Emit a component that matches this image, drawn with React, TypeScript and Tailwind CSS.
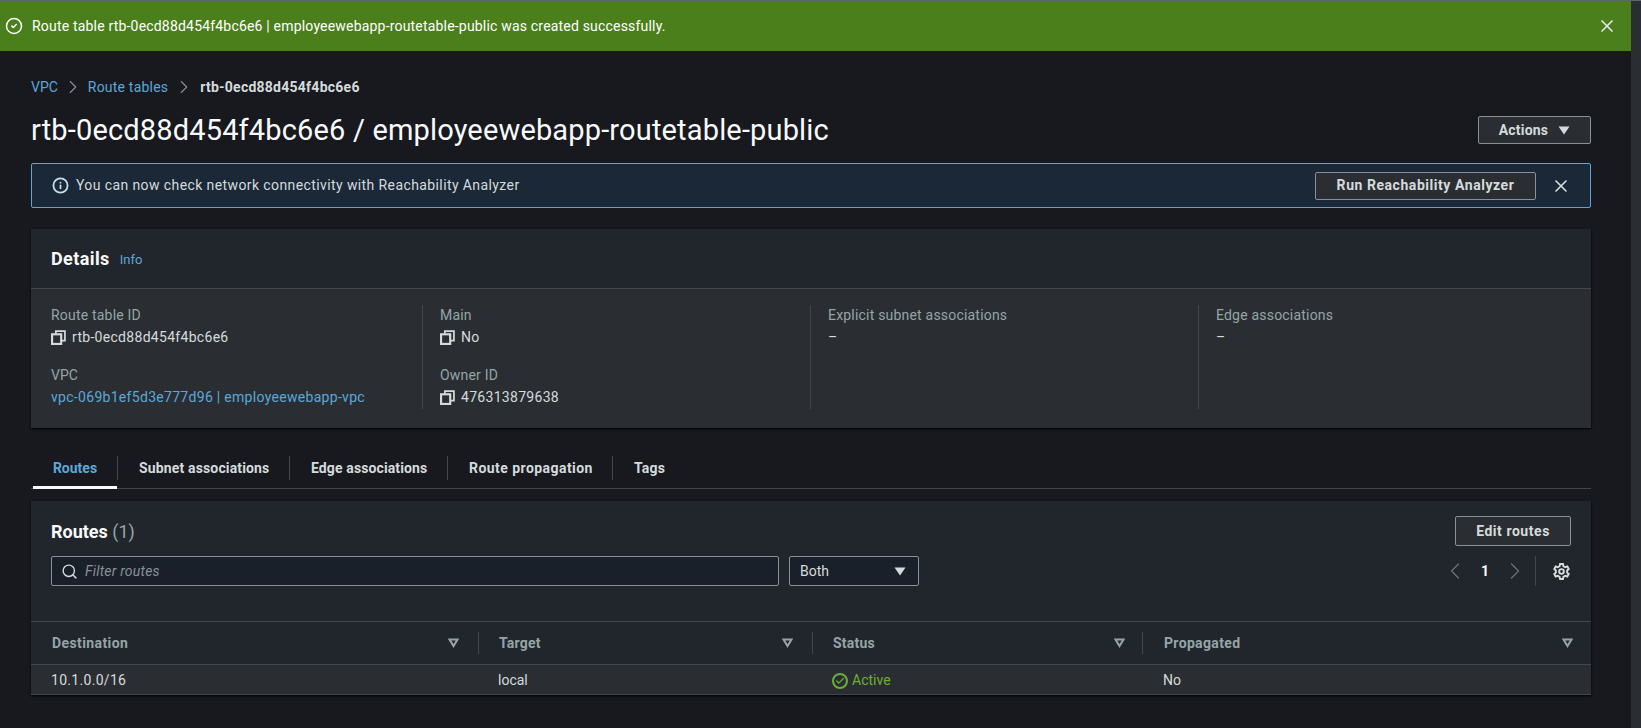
import { Check, ChevronLeft, ChevronRight, CircleCheck, Info, Search, X } from 'lucide-react';

function CopyIcon() {
  return (
    <svg width="15" height="15" viewBox="0 0 14 14" fill="none" stroke="#d5dbdb" strokeWidth="2" className="shrink-0">
      <path d="M4.5 3.5V1h8.5v9h-3" strokeWidth="1.6" />
      <rect x="1" y="4" width="8.5" height="9" />
    </svg>
  );
}

function CaretDown({ className = '' }: { className?: string }) {
  return (
    <svg width="12" height="9" viewBox="0 0 12 9" className={className}>
      <path d="M0.5 0.5h11L6 8.5z" fill="#d5dbdb" />
    </svg>
  );
}

function SortCaret() {
  return (
    <svg width="11" height="10" viewBox="0 0 11 10" fill="none" stroke="#95a5a6" strokeWidth="2" className="shrink-0">
      <path d="M1.5 1.5h8L5.5 8z" />
    </svg>
  );
}

function GearIcon() {
  return (
    <svg width="17" height="17" viewBox="0 0 16 16" fill="none" stroke="#d5dbdb" strokeWidth="1.8">
      <path d="M6.6 1h2.8l.4 2 1.7 1 2-.7 1.3 2.4-1.5 1.3v2l1.5 1.3-1.3 2.4-2-.7-1.7 1-.4 2H6.6l-.4-2-1.7-1-2 .7-1.3-2.4 1.5-1.3V7L1.2 5.7l1.3-2.4 2 .7 1.7-1z" />
      <circle cx="8" cy="8" r="2.2" />
    </svg>
  );
}

const tabs = [
  { label: 'Subnet associations', width: 'w-[172px]', tracking: 'tracking-[0.15px]' },
  { label: 'Edge associations', width: 'w-[158px]', tracking: 'tracking-[0.12px]' },
  { label: 'Route propagation', width: 'w-[165px]', tracking: 'tracking-[0.45px]' },
  { label: 'Tags', width: 'w-[70px]', tracking: 'tracking-[0.2px]' },
];
const columns = [
  { label: 'Destination', cls: 'pl-[21px] pr-[19px] tracking-[0.4px]' },
  { label: 'Target', cls: 'pl-[20px] pr-[19px] tracking-[0.2px]' },
  { label: 'Status', cls: 'pl-[20px] pr-[17px] tracking-[0.2px]' },
  { label: 'Propagated', cls: 'pl-[21px] pr-[18px] tracking-[0.35px]' },
];

function Field({ label, value, copy }: { label: string; value: string; copy?: boolean }) {
  return (
    <div>
      <div className="h-[20px] leading-[20px] tracking-[0.2px] text-[#95a5a6]">{label}</div>
      <div className="mt-[2px] flex h-[20px] items-center gap-[6px] leading-[20px] tracking-[0.3px] text-[#d5dbdb]">
        {copy && <CopyIcon />}
        {value}
      </div>
    </div>
  );
}

export default function App() {
  return (
    <div className="flex h-[728px] w-[1641px] flex-col overflow-hidden border-t border-[#5f666e] bg-[#17191f] text-[14px] font-['Roboto',sans-serif]">
      <div className="flex min-h-0 flex-1">
        <main className="w-[1631px] shrink-0">
          {/* Flash message */}
          <div className="flex h-[50px] items-center bg-[#4a7f1b] pl-[5px] pr-[14px] text-white">
            <CircleCheck size={18} strokeWidth={2} />
            <span className="ml-[9px] tracking-[0.19px]">Route table rtb-0ecd88d454f4bc6e6 | employeewebapp-routetable-public was created successfully.</span>
            <X size={20} strokeWidth={2} className="ml-auto text-[#e6eaea]" />
          </div>

          <div className="pl-[31px] pr-[40px]">
            {/* Breadcrumbs */}
            <div className="mt-[26px] flex h-[20px] items-center">
              <span className="text-[#5ba8d8]">VPC</span>
              <ChevronRight size={22} strokeWidth={1.2} className="mx-[4px] text-[#879196]" />
              <span className="tracking-[0.2px] text-[#5ba8d8]">Route tables</span>
              <ChevronRight size={22} strokeWidth={1.2} className="mx-[5px] text-[#879196]" />
              <span className="font-bold tracking-[0.25px] text-[#d5dbdb]">rtb-0ecd88d454f4bc6e6</span>
            </div>

            {/* Title */}
            <div className="mt-[15px] flex h-[36px] items-center justify-between">
              <h1 className="text-[29px] leading-[36px] tracking-[0.16px] text-[#fafafa]">rtb-0ecd88d454f4bc6e6 / employeewebapp-routetable-public</h1>
              <button className="flex h-[28px] w-[113px] items-center justify-center gap-[10px] rounded-[2px] border border-[#879196] bg-[#2a2e33] font-bold tracking-[0.2px] text-[#d5dbdb]">
                Actions
                <CaretDown />
              </button>
            </div>

            {/* Info banner */}
            <div className="mt-[15px] flex h-[45px] items-center rounded-[2px] border border-[#5ba8d8] bg-[#1b2838] pl-[20px] text-[#d5dbdb]">
              <Info size={17} strokeWidth={2.5} className="text-[#c4dfee]" />
              <span className="ml-[7px] tracking-[0.4px]">You can now check network connectivity with Reachability Analyzer</span>
              <button className="ml-auto flex h-[28px] w-[221px] items-center justify-center rounded-[2px] border border-[#879196] bg-[#2a2e33] font-bold tracking-[0.55px] text-[#d5dbdb]">
                Run Reachability Analyzer
              </button>
              <X size={20} strokeWidth={2} className="ml-[15px] mr-[19px] text-[#d5dbdb]" />
            </div>

            {/* Details */}
            <section className="mt-[21px] h-[199px] bg-[#2a2e33] shadow-[0_1px_2px_#000]">
              <div className="flex h-[60px] items-center border-b border-[#414750] bg-[#21252c] pl-[20px]">
                <h2 className="text-[18px] font-bold tracking-[0.4px] text-[#fafafa]">Details</h2>
                <span className="ml-[10px] mt-[2px] text-[13px] text-[#5ba8d8]">Info</span>
              </div>
              <div className="grid grid-cols-[372px_388px_388px_1fr] pl-[20px] pt-[16px]">
                <div className="flex h-[104px] flex-col gap-[18px] border-r border-[#414750]">
                  <Field label="Route table ID" value="rtb-0ecd88d454f4bc6e6" copy />
                  <div>
                    <div className="h-[20px] leading-[20px] text-[#95a5a6]">VPC</div>
                    <div className="mt-[2px] h-[20px] leading-[20px] tracking-[0.3px] text-[#5ba8d8]">vpc-069b1ef5d3e777d96 | employeewebapp-vpc</div>
                  </div>
                </div>
                <div className="flex h-[104px] flex-col gap-[18px] border-r border-[#414750] pl-[17px]">
                  <Field label="Main" value="No" copy />
                  <Field label="Owner ID" value="476313879638" copy />
                </div>
                <div className="h-[104px] border-r border-[#414750] pl-[17px]">
                  <Field label="Explicit subnet associations" value="–" />
                </div>
                <div className="h-[104px] pl-[17px]">
                  <Field label="Edge associations" value="–" />
                </div>
              </div>
            </section>

            {/* Tabs */}
            <nav className="mt-[28px] flex h-[33px] border-b border-[#414750] font-bold text-[#d5dbdb]">
              <div className="-mb-px ml-[2px] flex h-[33px] w-[84px] items-start justify-center border-b-[3px] border-[#fafafa] pt-[2px]">
                <span className="leading-[20px] text-[#5ba8d8]">Routes</span>
              </div>
              {tabs.map((tab) => (
                <div key={tab.label} className={`flex h-[24px] items-center border-l border-[#414750] pl-[21px] ${tab.width}`}>
                  <span className={tab.tracking}>{tab.label}</span>
                </div>
              ))}
            </nav>

            {/* Routes panel */}
            <section className="mt-[12px] h-[194px] bg-[#21252c] shadow-[0_1px_2px_#000]">
              <div className="h-[120px] px-[20px] pt-[15px]">
                <div className="flex h-[30px] items-center justify-between">
                  <h2 className="text-[18px] font-bold text-[#fafafa]">
                    Routes <span className="font-normal text-[#95a5a6]">(1)</span>
                  </h2>
                  <button className="flex h-[30px] w-[116px] items-center justify-center rounded-[2px] border border-[#879196] bg-[#2a2e33] font-bold tracking-[0.55px] text-[#d5dbdb]">
                    Edit routes
                  </button>
                </div>
                <div className="mt-[10px] flex h-[30px] items-center">
                  <div className="flex h-[30px] w-[728px] items-center rounded-[2px] border border-[#879196] bg-[#1a2029] pl-[9px]">
                    <Search size={17} strokeWidth={2} className="text-[#d5dbdb]" />
                    <span className="ml-[7px] italic tracking-[0.2px] text-[#879196]">Filter routes</span>
                  </div>
                  <div className="ml-[10px] flex h-[30px] w-[130px] items-center justify-between rounded-[2px] border border-[#879196] bg-[#1a2029] pl-[10px] pr-[12px] text-[#d5dbdb]">
                    Both
                    <CaretDown />
                  </div>
                  <div className="ml-auto flex h-[30px] items-center">
                    <ChevronLeft size={28} strokeWidth={1.1} className="text-[#687078]" />
                    <span className="mx-[12px] font-bold text-[#fafafa]">1</span>
                    <ChevronRight size={28} strokeWidth={1.1} className="text-[#687078]" />
                    <div className="ml-[6px] h-[30px] border-l border-[#414750]" />
                    <div className="ml-[17px] mr-[1px]">
                      <GearIcon />
                    </div>
                  </div>
                </div>
              </div>

              {/* Table */}
              <div className="grid h-[44px] grid-cols-[448px_334px_330px_1fr] items-center border-y border-[#414750] font-bold text-[#95a5a6]">
                {columns.map((col, i) => (
                  <div key={col.label} className={`flex h-[22px] items-center justify-between ${col.cls} ${i < 3 ? 'border-r border-[#414750]' : ''}`}>
                    {col.label}
                    <SortCaret />
                  </div>
                ))}
              </div>
              <div className="grid h-[30px] grid-cols-[448px_334px_330px_1fr] items-center border-b border-[#414750] bg-[#2a2e33] pt-[2px] text-[#d5dbdb]">
                <div className="pl-[20px] tracking-[0.3px]">10.1.0.0/16</div>
                <div className="pl-[19px]">local</div>
                <div className="flex items-center gap-[4px] pl-[19px] text-[#6aaf35]">
                  <span className="flex h-[16px] w-[16px] items-center justify-center rounded-full border-2 border-[#6aaf35]">
                    <Check size={10} strokeWidth={3} />
                  </span>
                  Active
                </div>
                <div className="pl-[20px]">No</div>
              </div>
            </section>
          </div>
        </main>
        <div className="flex-1 bg-[#2a2e33]" />
      </div>
    </div>
  );
}
